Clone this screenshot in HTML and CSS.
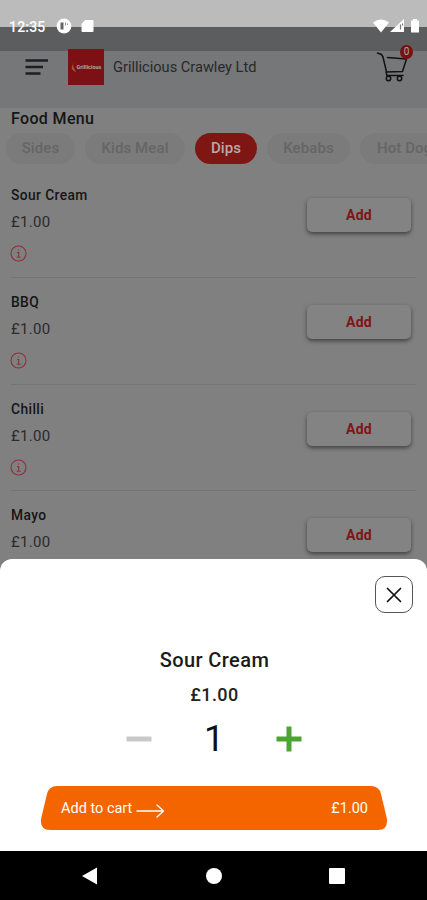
FILE: index.html
```
<!DOCTYPE html>
<html lang="en">
<head>
    <meta charset="UTF-8">
    <meta name="viewport" content="width=device-width, initial-scale=1.0">
    <title>Grillicious Crawley Ltd</title>
    <link rel="stylesheet" href="styles.css">
</head>
<body>
    <div class="phone">
        <div class="status-bg"></div>
        <div class="status-strip"></div>
        <!-- status bar -->
        <div class="status">
            <span class="time">12:35</span>
            <svg class="status-left" width="38" height="16" viewBox="0 0 38 16">
                <circle cx="8" cy="8" r="7.4" fill="#fff"/>
                <path d="M4.500 4.500h3v7h-3z" fill="#666"/>
                <path d="M9.500 4.500v3M11.500 5.500v1.500" fill="none" stroke="#999"/>
                <path d="M29 2h7.500q1 0 1 1v10q0 1-1 1H26.500q-1 0-1-1V6z" fill="#fff"/>
            </svg>
            <svg class="status-right" width="48" height="16" viewBox="0 0 48 16">
                <path d="M0 4.500Q8 -1.500 16 4.500L8 14.500z" fill="#fff"/>
                <path d="M17 14L31 1v13z" fill="#fff"/>
                <path d="M27.500 6.500v5M29.500 5.500v2" stroke="#777" stroke-width="1.200"/>
                <path d="M38 2.500h2V1h4v1.500h2V14q0 .5-.5.5h-7q-.5 0-.5-.5z" fill="#fff"/>
            </svg>
        </div>
        <!-- header -->
        <header class="header">
            <svg class="menu-icon" width="24" height="18" viewBox="0 0 24 18">
                <path d="M.5 2.500h22.500M.5 9h17.500M.5 15.500h15" stroke="#1d1e20" stroke-width="2.600"/>
            </svg>
            <div class="logo">
                <svg width="6" height="12" viewBox="0 0 6 12"><path d="M5 0Q1 3 2.500 6T5 11Q0 9 .8 5.500T5 0z" fill="#a85a12"/></svg>
                <span>Grillicious</span>
            </div>
            <h1 class="shop-name">Grillicious Crawley Ltd</h1>
            <div class="cart">
                <svg width="34" height="32" viewBox="0 0 34 32" fill="none" stroke="#111213" stroke-width="1.500" stroke-linecap="round" stroke-linejoin="round">
                    <path d="M1.500 2L5.500 3.500L7 6L10.500 21M11.500 6.500L30.500 8L26.500 20.500L10 21L11 24.500H27"/>
                    <circle cx="12.500" cy="27.500" r="2.200"/>
                    <circle cx="23.500" cy="27.500" r="2.200"/>
                </svg>
                <span class="badge">0</span>
            </div>
        </header>
        <!-- food menu -->
        <main class="menu">
            <h2 class="menu-title">Food Menu</h2>
            <nav class="tabs">
                <span class="tab sides">Sides</span>
                <span class="tab kids">Kids Meal</span>
                <span class="tab active">Dips</span>
                <span class="tab kebabs">Kebabs</span>
                <span class="tab hotdogs">Hot Dogs</span>
            </nav>
            <div class="list">
                <div class="item">
                    <div class="info">
                        <h3>Sour Cream</h3>
                        <p>£1.00</p>
                        <svg class="info-icon" width="17" height="17" viewBox="0 0 17 17"><circle cx="8.500" cy="8.500" r="7.500"/><path d="M7 7.500h1.700v4.500M6.700 12.200h4M8.500 4.500v1"/></svg>
                    </div>
                    <button class="add">Add</button>
                </div>
                <div class="item">
                    <div class="info">
                        <h3>BBQ</h3>
                        <p>£1.00</p>
                        <svg class="info-icon" width="17" height="17" viewBox="0 0 17 17"><circle cx="8.500" cy="8.500" r="7.500"/><path d="M7 7.500h1.700v4.500M6.700 12.200h4M8.500 4.500v1"/></svg>
                    </div>
                    <button class="add">Add</button>
                </div>
                <div class="item">
                    <div class="info">
                        <h3>Chilli</h3>
                        <p>£1.00</p>
                        <svg class="info-icon" width="17" height="17" viewBox="0 0 17 17"><circle cx="8.500" cy="8.500" r="7.500"/><path d="M7 7.500h1.700v4.500M6.700 12.200h4M8.500 4.500v1"/></svg>
                    </div>
                    <button class="add">Add</button>
                </div>
                <div class="item">
                    <div class="info">
                        <h3>Mayo</h3>
                        <p>£1.00</p>
                    </div>
                    <button class="add">Add</button>
                </div>
            </div>
        </main>
        <!-- bottom sheet -->
        <section class="sheet">
            <button class="close">
                <svg width="16" height="16" viewBox="0 0 16 16"><path d="M1.500 1.500l13 13M14.500 1.500l-13 13" stroke="#111" stroke-width="1.700" stroke-linecap="round"/></svg>
            </button>
            <h2 class="sheet-title">Sour Cream</h2>
            <p class="sheet-price">£1.00</p>
            <div class="counter">
                <svg width="26" height="26" viewBox="0 0 26 26"><path d="M0.500 13h25" stroke="#c9c9cc" stroke-width="5"/></svg>
                <span class="count">1</span>
                <svg width="26" height="26" viewBox="0 0 26 26"><path d="M0.500 13h25M13 .5v25" stroke="#4ba62f" stroke-width="5"/></svg>
            </div>
            <div class="checkout">
                <svg class="checkout-bg" width="348" height="46" viewBox="0 0 348 46">
                    <path d="M17 1H331Q339 1 341 9L347 34Q348 45 338 45H10Q0 45 1 34L7 9Q9 1 17 1z" fill="#f46500"/>
                </svg>
                <span>Add to cart</span>
                <svg class="arrow" width="29" height="14" viewBox="0 0 29 14"><path d="M1 7h26M21 1l6.500 6L21 13" fill="none" stroke="#fff" stroke-width="1.300" stroke-linecap="round" stroke-linejoin="round"/></svg>
                <span class="total">£1.00</span>
            </div>
        </section>
        <!-- android buttons -->
        <footer class="navbar">
            <svg width="18" height="18" viewBox="0 0 18 18"><path d="M1 9L16 .5v17z" fill="#fff"/></svg>
            <svg width="18" height="18" viewBox="0 0 18 18"><circle cx="9" cy="9" r="8" fill="#fff"/></svg>
            <svg width="18" height="18" viewBox="0 0 18 18"><rect x="1" y="1" width="16" height="16" rx="1" fill="#fff"/></svg>
        </footer>
    </div>
</body>
</html>
```
FILE: styles.css
```
* {
    box-sizing: border-box;
    margin: 0;
    padding: 0;
}
body {
    font-family: Roboto, "Liberation Sans", sans-serif;
    background: #808080;
    overflow: hidden;
}
button {
    font-family: inherit;
}
.phone {
    position: relative;
    width: 427px;
    height: 900px;
    overflow: hidden;
    display: flex;
    flex-direction: column;
}
.status-bg {
    flex: none;
    height: 27px;
    background: #bbb;
}
.status-strip {
    flex: none;
    height: 24px;
    background: #5c5d5e;
}
/* status icons lie over both bands */
.status {
    position: absolute;
    top: 17px;
    left: 9px;
    right: 6px;
    height: 18px;
    display: flex;
    align-items: center;
    color: #fff;
}
.time {
    width: 47px;
    padding-top: 1px;
    font-size: 14px;
    font-weight: 500;
    letter-spacing: 0.2px;
}
.status-right {
    margin-left: auto;
}
.header {
    flex: none;
    height: 57px;
    padding: 0 17px 0 25px;
    display: flex;
    background: #757779;
}
.menu-icon {
    margin-top: 7px;
}
.logo {
    width: 36px;
    height: 36px;
    margin: -2px 9px 0 19px;
    display: flex;
    align-items: center;
    justify-content: center;
    background: #7b1114;
    color: #aaa;
    font-size: 5.5px;
    font-weight: 700;
}
.shop-name {
    margin-top: 7px;
    font-size: 14.6px;
    line-height: 18px;
    font-weight: 400;
    color: #28292a;
}
.cart {
    position: relative;
    width: 34px;
    height: 32px;
    margin-left: auto;
}
.badge {
    position: absolute;
    top: -6px;
    right: -3px;
    width: 13px;
    height: 14px;
    border-radius: 50%;
    background: #7b1010;
    color: #aaa;
    font-size: 10px;
    line-height: 14px;
    text-align: center;
}
.menu {
    flex: none;
    height: 452px;
    overflow: hidden;
}
.menu-title {
    padding: 2px 0 0 11px;
    font-size: 16px;
    line-height: 18px;
    font-weight: 500;
    letter-spacing: 0.35px;
    color: #151515;
}
.tabs {
    display: flex;
    gap: 10px;
    margin: 5px 0 0 6px;
}
.tab {
    flex: none;
    height: 31px;
    border-radius: 16px;
    background: #7b7b7b;
    color: #656565;
    font-size: 15px;
    line-height: 31px;
    font-weight: 500;
    letter-spacing: 0.1px;
    text-align: center;
}
.sides {
    width: 69px;
}
.kids {
    width: 100px;
}
.active {
    width: 62px;
    background: #7e1714;
    color: #b5aaaa;
}
.kebabs {
    width: 83px;
}
.hotdogs {
    width: 97px;
}
.list {
    padding: 7px 11px 0;
}
.item {
    height: 106.8px;
    display: flex;
    justify-content: space-between;
    padding-right: 5px;
    border-bottom: 1px solid #757575;
}
.info h3 {
    margin-top: 16px;
    font-size: 13.8px;
    line-height: 16px;
    font-weight: 500;
    letter-spacing: 0.4px;
    color: #151515;
}
.info p {
    margin-top: 9px;
    font-size: 15px;
    line-height: 20px;
    letter-spacing: 0.3px;
    color: #2b2b2b;
}
.info-icon {
    display: block;
    margin: 13px 0 0 -1px;
    fill: none;
    stroke: #8c3039;
    stroke-width: 1.1;
}
.add {
    width: 104px;
    height: 34px;
    margin-top: 27px;
    border: none;
    border-radius: 5px;
    background: #838383;
    box-shadow: 0 2px 4px rgba(0, 0, 0, 0.5);
    color: #821317;
    font-size: 14px;
    font-weight: 700;
    letter-spacing: 0.2px;
}
.sheet {
    flex: none;
    height: 292px;
    margin-top: -1px;
    padding-top: 17px;
    display: flex;
    flex-direction: column;
    align-items: center;
    background: #fff;
    border-radius: 12px 12px 0 0;
    position: relative;
    z-index: 1;
}
.close {
    align-self: flex-end;
    width: 38px;
    height: 37px;
    margin-right: 14px;
    display: flex;
    align-items: center;
    justify-content: center;
    background: #fff;
    border: 1px solid #555;
    border-radius: 10px;
}
.sheet-title {
    margin-top: 35px;
    margin-left: 2px;
    font-size: 20px;
    line-height: 24px;
    font-weight: 500;
    letter-spacing: 0.4px;
    color: #1b1b1b;
}
.sheet-price {
    margin-top: 12px;
    margin-left: 2px;
    font-size: 18px;
    line-height: 22px;
    font-weight: 500;
    letter-spacing: 0.4px;
    color: #222;
}
.counter {
    width: 176px;
    height: 40px;
    margin-top: 13px;
    margin-left: 1px;
    display: flex;
    align-items: center;
    justify-content: space-between;
}
.count {
    font-size: 36px;
    line-height: 40px;
    font-weight: 400;
    color: #111;
}
.checkout {
    position: relative;
    width: 348px;
    height: 46px;
    margin-top: 26px;
    margin-left: 1px;
    padding: 0 20px 0 21px;
    display: flex;
    align-items: center;
    color: #fff;
    font-size: 14.5px;
}
.checkout-bg {
    position: absolute;
    left: 0;
    top: 0;
}
.checkout span,
.arrow {
    position: relative;
}
.arrow {
    margin: 5px 0 0 4px;
}
.total {
    margin-left: auto;
}
.navbar {
    flex: none;
    height: 49px;
    padding: 0 81px;
    display: flex;
    align-items: center;
    justify-content: space-between;
    background: #000;
}
```
